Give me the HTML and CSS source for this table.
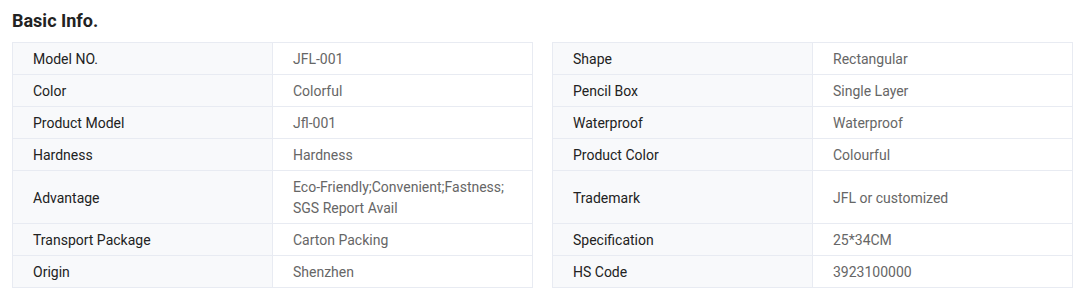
FILE: index.html
```html
<!DOCTYPE html>
<html>
<head>
<meta charset="utf-8">
<link rel="stylesheet" href="styles.css">
</head>
<body>
<div class="page">
  <h2 class="title">Basic Info.</h2>
  <table class="info">
    <colgroup><col class="c"><col class="c"><col class="gap"><col class="c"><col class="c"></colgroup>
    <tr><td class="k">Model NO.</td><td class="v">JFL-001</td><td class="s"></td><td class="k">Shape</td><td class="v">Rectangular</td></tr>
    <tr><td class="k">Color</td><td class="v">Colorful</td><td class="s"></td><td class="k">Pencil Box</td><td class="v">Single Layer</td></tr>
    <tr><td class="k">Product Model</td><td class="v">Jfl-001</td><td class="s"></td><td class="k">Waterproof</td><td class="v">Waterproof</td></tr>
    <tr><td class="k">Hardness</td><td class="v">Hardness</td><td class="s"></td><td class="k">Product Color</td><td class="v">Colourful</td></tr>
    <tr><td class="k">Advantage</td><td class="v">Eco-Friendly;Convenient;Fastness;<br>SGS Report Avail</td><td class="s"></td><td class="k">Trademark</td><td class="v">JFL or customized</td></tr>
    <tr><td class="k">Transport Package</td><td class="v">Carton Packing</td><td class="s"></td><td class="k">Specification</td><td class="v">25*34CM</td></tr>
    <tr><td class="k">Origin</td><td class="v">Shenzhen</td><td class="s"></td><td class="k">HS Code</td><td class="v">3923100000</td></tr>
  </table>
</div>
</body>
</html>
```
FILE: styles.css
```css
html, body {
  margin: 0;
  padding: 0;
  background: #fff;
}
body {
  font-family: Roboto, "Liberation Sans", sans-serif;
}
.page {
  padding: 10px 18px 0 12px;
}
.title {
  margin: 0;
  font-size: 18px;
  line-height: 22px;
  font-weight: 700;
  color: #222;
}
.info {
  width: 1060px;
  margin-top: 10px;
  border-collapse: collapse;
  table-layout: fixed;
  font-size: 14px;
}
.info .c {
  width: 260px;
}
.info .gap {
  width: 20px;
}
.info td {
  border: 1px solid #e8ebf2;
  padding: 6px 20px 4px;
  line-height: 21px;
  vertical-align: middle;
}
.info td.s {
  border: none;
  padding: 0;
  background: #fff;
}
.info .k {
  background: #f8f9fb;
  color: #222;
}
.info .v {
  background: #fff;
  color: #666;
}
```
